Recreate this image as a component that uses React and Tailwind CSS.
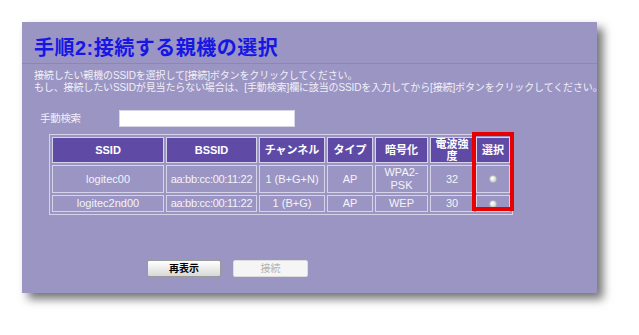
export default function App() {
  const rows = [
    { ssid: "logitec00", bssid: "aa:bb:cc:00:11:22", ch: "1 (B+G+N)", type: "AP", enc: ["WPA2-", "PSK"], sig: "32" },
    { ssid: "logitec2nd00", bssid: "aa:bb:cc:00:11:22", ch: "1 (B+G)", type: "AP", enc: ["WEP"], sig: "30" },
  ];
  const th = "bg-[#5f4ba5] border border-[#d6d3e8] text-white font-bold text-[11px] leading-[12px] text-center p-0";
  const td = "border border-[#d6d3e8] text-[#f4f3fa] text-[11px] leading-[13px] text-center p-0";

  return (
    <div className="w-[639px] h-[335px] bg-white pt-[22px] pl-[22px] font-['Liberation_Sans','Noto_Sans_CJK_JP',sans-serif]">
      <div className="relative w-[575px] h-[271px] bg-[#9b95c3] shadow-[6px_6px_9px_rgba(0,0,0,0.55)]">
        <h1 className="pl-[12px] pt-[15px] h-[41px] text-[20px] leading-[22px] font-bold text-[#1717e3] tracking-[0.5px]">
          手順2:接続する親機の選択
        </h1>
        <div className="h-px bg-[#8c87ad]" />
        <div className="pl-[12px] pt-[6px] text-[10px] leading-[12px] text-[#f1f0f8] tracking-[-0.13px] whitespace-nowrap">
          <div>接続したい親機のSSIDを選択して[接続]ボタンをクリックしてください。</div>
          <div>もし、接続したいSSIDが見当たらない場合は、[手動検索]欄に該当のSSIDを入力してから[接続]ボタンをクリックしてください。</div>
        </div>

        <div className="flex items-center mt-[16px] pl-[18px] h-[17px]">
          <span className="w-[79px] text-[10.5px] text-[#f1f0f8] tracking-[-0.3px]">手動検索</span>
          <div className="w-[176px] h-[17px] bg-white border border-[#d8d6e6]" />
        </div>

        <div className="relative ml-[27px] mt-[7px] w-[464px]">
          <table className="border border-[#d6d3e8] border-separate border-spacing-[2px] table-fixed w-[464px]">
            <colgroup>
              <col className="w-[112px]" />
              <col className="w-[91px]" />
              <col className="w-[66px]" />
              <col className="w-[46px]" />
              <col className="w-[53px]" />
              <col className="w-[44px]" />
              <col className="w-[34px]" />
            </colgroup>
            <thead>
              <tr className="h-[25px]">
                <th className={th}>SSID</th>
                <th className={th}>BSSID</th>
                <th className={th}>チャンネル</th>
                <th className={th}>タイプ</th>
                <th className={th}>暗号化</th>
                <th className={th}>電波強<br />度</th>
                <th className={th}>選択</th>
              </tr>
            </thead>
            <tbody>
              {rows.map((r) => (
                <tr key={r.ssid} className={r.enc.length > 1 ? "h-[27px]" : "h-[17px]"}>
                  <td className={td}>{r.ssid}</td>
                  <td className={td + " tracking-[-0.3px]"}>{r.bssid}</td>
                  <td className={td}>{r.ch}</td>
                  <td className={td}>{r.type}</td>
                  <td className={td}>
                    {r.enc.map((e) => (
                      <div key={e}>{e}</div>
                    ))}
                  </td>
                  <td className={td}>{r.sig}</td>
                  <td className={td}>
                    <div className="mx-auto w-[8px] h-[8px] rounded-full bg-[radial-gradient(circle_at_40%_35%,#ffffff,#c8c8c8)] border border-[#b5b5b5]" />
                  </td>
                </tr>
              ))}
            </tbody>
          </table>
          <div className="absolute left-[423px] top-[-2px] w-[42px] h-[79px] border-[4px] border-[#e60000]" />
        </div>

        <div className="flex gap-[12px] ml-[125px] mt-[45px]">
          <button className="w-[74px] h-[17px] rounded-[2px] border border-[#9a9a9a] bg-gradient-to-b from-[#ffffff] to-[#d9d9d9] text-[10px] leading-[15px] font-bold text-black">
            再表示
          </button>
          <button className="w-[75px] h-[17px] rounded-[2px] border border-[#dcdcdc] bg-[#f5f5f5] text-[10px] leading-[15px] text-[#b3b3b3]">
            接続
          </button>
        </div>
      </div>
    </div>
  );
}
